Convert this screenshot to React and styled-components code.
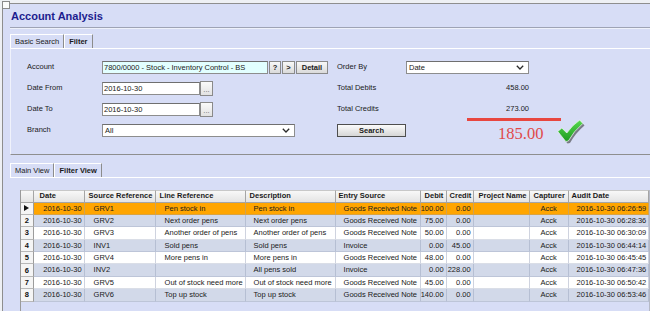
import styled, { createGlobalStyle } from "styled-components";

const GlobalStyle = createGlobalStyle`
  html, body { margin: 0; padding: 0; background: #eef0f4; }
  body {
    width: 650px;
    height: 311px;
    overflow: hidden;
    font-family: "Liberation Sans", Arial, sans-serif;
    color: #1a1a1a;
  }
`;

const Page = styled.div`
  position: relative;
  width: 650px;
  height: 311px;
`;

const Corner = styled.div`
  position: absolute;
  left: 2px;
  top: 1px;
  width: 6px;
  height: 6px;
  border: 1px solid #8a8a8a;
  background: #fbfbfb;
  z-index: 2;
`;

const Window = styled.div`
  position: relative;
  top: 3px;
  left: 2px;
  width: 648px;
  height: 308px;
  box-sizing: border-box;
  border-top: 1px solid #8e8e8e;
  border-left: 1px solid #8e8e8e;
  background: #d7ddf6;
  padding-left: 7px;
  display: flex;
  flex-direction: column;
  overflow: hidden;

  & > * {
    flex-shrink: 0;
  }
`;

const TitleBar = styled.div`
  height: 24px;
  box-sizing: border-box;
  padding: 6px 0 0 1px;
  border-bottom: 1px solid #9ea3b5;
  box-shadow: 0 1px 0 #eef1fb;
  font-size: 11px;
  line-height: 13px;
  font-weight: 700;
  color: #1c1c8e;
`;

const TabStrip = styled.div`
  display: flex;
  height: 14px;
  margin-top: ${(p) => p.$top}px;
`;

const Tab = styled.div`
  box-sizing: border-box;
  height: 14px;
  padding: 0 4px;
  border: 1px solid #fff;
  border-right-color: #8c8c8c;
  border-bottom: none;
  font-size: 7.5px;
  line-height: 13px;
  font-weight: ${(p) => (p.$active ? 400 : 700)};
  color: #1a1a1a;
  white-space: nowrap;
`;

const SearchPanel = styled.div`
  position: relative;
  height: 107px;
  box-sizing: border-box;
  border-top: 1px solid #fff;
  border-left: 1px solid #f0f2fb;
  border-bottom: 1px solid #8e8e8e;
  padding: 12px 0 0 16px;
  display: flex;
`;

const FormGrid = styled.div`
  display: grid;
  grid-template-columns: ${(p) => p.$cols};
  grid-auto-rows: 13px;
  row-gap: 8px;
  width: ${(p) => p.$width}px;
  align-items: center;
`;

const Label = styled.div`
  font-size: 7.5px;
  line-height: 10px;
  margin-top: -2px;
  color: #1a1a1a;
  white-space: nowrap;
`;

const Control = styled.div`
  display: flex;
  align-items: center;
  height: 13px;
`;

const TextBox = styled.div`
  box-sizing: border-box;
  width: ${(p) => p.$w}px;
  height: 13px;
  border: 1px solid #8d8d8d;
  border-top-color: #6f6f6f;
  background: ${(p) => p.$bg || "#fff"};
  padding-left: 1px;
  font-size: 7.5px;
  line-height: 11px;
  white-space: nowrap;
  overflow: hidden;
`;

const SmallButton = styled.div`
  box-sizing: border-box;
  width: ${(p) => p.$w}px;
  height: ${(p) => p.$h || 13}px;
  margin-left: 1px;
  border: 1px solid #8a8a8a;
  background: linear-gradient(#f8f8f8, #dadada);
  font-size: 7.5px;
  line-height: ${(p) => (p.$h || 13) - 2}px;
  font-weight: 700;
  text-align: center;
  color: #1a1a1a;
`;

const DotsButton = styled(SmallButton)`
  margin-left: 0;
  font-weight: 400;
  line-height: 16px;
  color: #666;
  background: linear-gradient(#fafafa, #e2e2e2);
`;

const SelectBox = styled(TextBox)`
  display: flex;
  align-items: center;
  justify-content: space-between;
  padding: 0 4px 0 2px;
`;

const Value = styled.div`
  width: 123px;
  font-size: 7.5px;
  line-height: 10px;
  margin-top: -2px;
  text-align: right;
`;

const SearchButton = styled.div`
  box-sizing: border-box;
  width: 69px;
  height: 13px;
  border: 1px solid #4e4e4e;
  background: linear-gradient(#fbfbfb, #d6d6d6);
  font-size: 7.5px;
  line-height: 11px;
  font-weight: 700;
  text-align: center;
  color: #1a1a1a;
`;

const RedLine = styled.div`
  position: absolute;
  left: 456px;
  top: 69px;
  width: 94px;
  height: 3px;
  background: #e8463f;
`;

const Difference = styled.div`
  position: absolute;
  left: 487px;
  top: 77px;
  font-family: "Liberation Serif", "Times New Roman", serif;
  font-size: 16.5px;
  line-height: 16px;
  color: #e04a4a;
`;

const CheckMark = styled.svg`
  position: absolute;
  left: 546px;
  top: 70px;
`;

const GridPanel = styled.div`
  flex: 1 1 auto;
  min-height: 0;
  border-top: 1px solid #fff;
  padding: 12px 0 0 10px;
  display: flex;
`;

const GridFrame = styled.div`
  border-left: 1px solid #9a9a9a;
  border-right: 1px solid #b5b9c6;
`;

const Table = styled.div`
  display: grid;
  grid-template-columns: ${(p) => p.$cols};
  grid-template-rows: 12.5px;
  grid-auto-rows: 12.4px;
  font-size: 7.5px;
`;

const HeadCell = styled.div`
  box-sizing: border-box;
  background: linear-gradient(#f8f8f8, #e4e4e4);
  border-right: 1px solid #a5a5a5;
  border-bottom: 1px solid #a5a5a5;
  border-top: 1px solid #c8c8c8;
  padding-left: ${(p) => p.$pad ?? 4}px;
  font-weight: 700;
  line-height: 10.5px;
  white-space: nowrap;
  overflow: hidden;
  color: #1a1a1a;
`;

const RowHead = styled.div`
  box-sizing: border-box;
  background: #f5f5f5;
  border-right: 1px solid #9c9c9c;
  border-bottom: 1px solid #b8b8b8;
  display: flex;
  align-items: center;
  justify-content: center;
  font-weight: 700;
  color: #111;
`;

const Cell = styled.div`
  box-sizing: border-box;
  background: ${(p) => p.$bg};
  color: #1a1a1a;
  border-right: 1px solid rgba(150, 160, 185, 0.45);
  border-bottom: 1px solid rgba(150, 160, 185, 0.35);
  padding: ${(p) =>
    p.$align === "right" ? "0 2px 0 0" : p.$align === "center" ? "0" : `0 0 0 ${p.$pad ?? 9}px`};
  text-align: ${(p) => p.$align || "left"};
  line-height: 11.4px;
  white-space: nowrap;
  overflow: hidden;
`;

const Chevron = () => (
  <svg width="8" height="5" viewBox="0 0 8 5">
    <polyline points="0.8,0.8 4,4 7.2,0.8" fill="none" stroke="#2a2a2a" strokeWidth="1.3" />
  </svg>
);

const columns = [
  { title: "Date", w: 51, align: "right", hpad: 6 },
  { title: "Source Reference", w: 71 },
  { title: "Line Reference", w: 90 },
  { title: "Description", w: 90, pad: 8 },
  { title: "Entry Source", w: 85, pad: 8, hpad: 3 },
  { title: "Debit", w: 26, align: "right" },
  { title: "Credit", w: 27, align: "right", hpad: 3 },
  { title: "Project Name", w: 56, hpad: 5 },
  { title: "Capturer", w: 39, align: "center" },
  { title: "Audit Date", w: 80, pad: 8, hpad: 3 },
];

const rows = [
  ["2016-10-30", "GRV1", "Pen stock in", "Pen stock in", "Goods Received Note", "100.00", "0.00", "", "Acck", "2016-10-30 06:26:59"],
  ["2016-10-30", "GRV2", "Next order pens", "Next order pens", "Goods Received Note", "75.00", "0.00", "", "Acck", "2016-10-30 06:28:36"],
  ["2016-10-30", "GRV3", "Another order of pens", "Another order of pens", "Goods Received Note", "50.00", "0.00", "", "Acck", "2016-10-30 06:30:09"],
  ["2016-10-30", "INV1", "Sold pens", "Sold pens", "Invoice", "0.00", "45.00", "", "Acck", "2016-10-30 06:44:14"],
  ["2016-10-30", "GRV4", "More pens in", "More pens in", "Goods Received Note", "48.00", "0.00", "", "Acck", "2016-10-30 06:45:45"],
  ["2016-10-30", "INV2", "", "All pens sold", "Invoice", "0.00", "228.00", "", "Acck", "2016-10-30 06:47:36"],
  ["2016-10-30", "GRV5", "Out of stock need more", "Out of stock need more", "Goods Received Note", "45.00", "0.00", "", "Acck", "2016-10-30 06:50:42"],
  ["2016-10-30", "GRV6", "Top up stock", "Top up stock", "Goods Received Note", "140.00", "0.00", "", "Acck", "2016-10-30 06:53:46"],
];

const rowColor = (i) => (i === 0 ? "#ffa500" : i % 2 === 1 ? "#d2d9e9" : "#ffffff");

const App = () => {
  const cols = ["12.6px", ...columns.map((c) => `${c.w}px`)].join(" ");

  return (
    <Page>
      <GlobalStyle />
      <Corner />
      <Window>
        <TitleBar>Account Analysis</TitleBar>

        <TabStrip $top={6}>
          <Tab $active>Basic Search</Tab>
          <Tab>Filter</Tab>
        </TabStrip>

        <SearchPanel>
          <FormGrid $cols="75px auto" $width={310}>
            <Label>Account</Label>
            <Control>
              <TextBox $w={166} $bg="#e2ffff">7800/0000 - Stock - Inventory Control - BS</TextBox>
              <SmallButton $w={12}>?</SmallButton>
              <SmallButton $w={13}>&gt;</SmallButton>
              <SmallButton $w={32}>Detail</SmallButton>
            </Control>

            <Label>Date From</Label>
            <Control>
              <TextBox $w={98}>2016-10-30</TextBox>
              <DotsButton $w={13} $h={15}>...</DotsButton>
            </Control>

            <Label>Date To</Label>
            <Control>
              <TextBox $w={98}>2016-10-30</TextBox>
              <DotsButton $w={13} $h={15}>...</DotsButton>
            </Control>

            <Label>Branch</Label>
            <Control>
              <SelectBox $w={193}>
                <span>All</span>
                <Chevron />
              </SelectBox>
            </Control>
          </FormGrid>

          <FormGrid $cols="69px 123px" $width={192}>
            <Label>Order By</Label>
            <Control>
              <SelectBox $w={123}>
                <span>Date</span>
                <Chevron />
              </SelectBox>
            </Control>

            <Label>Total Debits</Label>
            <Value>458.00</Value>

            <Label>Total Credits</Label>
            <Value>273.00</Value>

            <SearchButton>Search</SearchButton>
          </FormGrid>

          <RedLine />
          <Difference>185.00</Difference>
          <CheckMark width="28" height="25" viewBox="0 0 28 25">
            <defs>
              <linearGradient id="chk" x1="0" y1="0" x2="0" y2="1">
                <stop offset="0" stopColor="#58d850" />
                <stop offset="1" stopColor="#1c9a20" />
              </linearGradient>
            </defs>
            <path
              d="M2.5 14.5 L6.5 11 L11.5 16 Q17 8 24.5 3 L27.5 6.5 Q18.5 14 13 24 L10.5 24.5 Z"
              fill="#3a3a3a"
              opacity="0.6"
            />
            <path
              d="M0.8 12.5 L4.8 9 L9.8 14 Q15.3 6 22.8 1 L25.8 4.5 Q16.8 12 11.3 22 L8.8 22.5 Z"
              fill="url(#chk)"
              stroke="#f4fff4"
              strokeWidth="0.7"
              strokeLinejoin="round"
            />
          </CheckMark>
        </SearchPanel>

        <TabStrip $top={8}>
          <Tab $active>Main View</Tab>
          <Tab>Filter View</Tab>
        </TabStrip>

        <GridPanel>
          <GridFrame>
            <Table $cols={cols}>
              <HeadCell />
              {columns.map((c) => (
                <HeadCell key={c.title} $pad={c.hpad}>
                  {c.title}
                </HeadCell>
              ))}
              {rows.map((r, i) => [
                <RowHead key={`h${i}`}>
                  {i === 0 ? (
                    <svg width="5" height="6" viewBox="0 0 5 6">
                      <polygon points="0,0 5,3 0,6" fill="#111" />
                    </svg>
                  ) : (
                    i + 1
                  )}
                </RowHead>,
                ...r.map((v, j) => (
                  <Cell
                    key={`${i}-${j}`}
                    $bg={rowColor(i)}
                    $align={columns[j].align}
                    $pad={columns[j].pad}
                  >
                    {v}
                  </Cell>
                )),
              ])}
            </Table>
          </GridFrame>
        </GridPanel>
      </Window>
    </Page>
  );
};

export default App;
